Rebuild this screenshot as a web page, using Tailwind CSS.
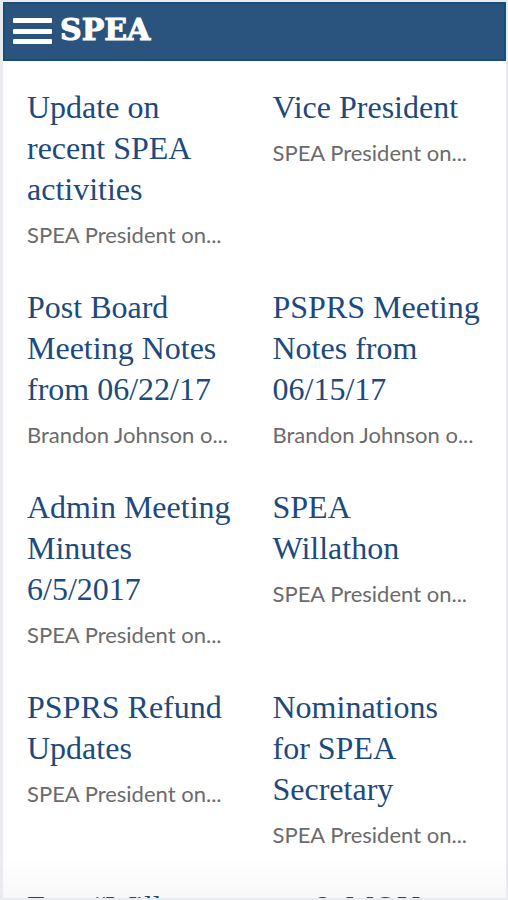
<!DOCTYPE html>
<html lang="en">
  <head>
    <meta charset="UTF-8" />
    <meta name="viewport" content="width=device-width, initial-scale=1.0" />
    <script src="https://cdn.jsdelivr.net/npm/@tailwindcss/browser@4"></script>
    <title>SPEA</title>
  </head>
  <body class="bg-white">
    <div class="relative flex h-screen flex-col overflow-hidden border-2 border-l-3 border-[#e9ebee] bg-white">
      <header class="flex h-[59px] shrink-0 items-center gap-2 border-2 border-[#184f79] bg-[#2a547e] px-2">
        <button type="button" aria-label="Open menu" class="text-white">
          <svg class="h-7 w-[39px]" viewBox="0 0 39 28" fill="currentColor" aria-hidden="true">
            <rect x="0" y="0" width="39" height="5" rx="1" />
            <rect x="0" y="11" width="39" height="5" rx="1" />
            <rect x="0" y="21" width="39" height="5" rx="1" />
          </svg>
        </button>
        <a href="#" class="pb-1 font-['DejaVu_Serif',serif] text-[30px] leading-8 font-bold text-white [-webkit-text-stroke:1px_white]">SPEA</a>
      </header>

      <main class="grid grid-cols-2 gap-x-8 gap-y-[34px] pt-[26px] pr-5 pl-6 font-['Liberation_Serif',serif] text-[32px] leading-[41px] text-[#1d4a7c]">
        <article>
          <h2><a href="#">Update on<br />recent SPEA<br />activities</a></h2>
          <p class="mt-[7px] truncate font-[Lato,sans-serif] text-[22px] leading-9 text-[#6b6b6b]">SPEA President on...</p>
        </article>
        <article>
          <h2><a href="#">Vice President</a></h2>
          <p class="mt-[7px] truncate font-[Lato,sans-serif] text-[22px] leading-9 text-[#6b6b6b]">SPEA President on...</p>
        </article>

        <article>
          <h2><a href="#">Post Board<br />Meeting Notes<br />from 06/22/17</a></h2>
          <p class="mt-[7px] truncate font-[Lato,sans-serif] text-[22px] leading-9 text-[#6b6b6b]">Brandon Johnson o...</p>
        </article>
        <article>
          <h2><a href="#">PSPRS Meeting<br />Notes from<br />06/15/17</a></h2>
          <p class="mt-[7px] truncate font-[Lato,sans-serif] text-[22px] leading-9 text-[#6b6b6b]">Brandon Johnson o...</p>
        </article>

        <article>
          <h2><a href="#">Admin Meeting<br />Minutes<br />6/5/2017</a></h2>
          <p class="mt-[7px] truncate font-[Lato,sans-serif] text-[22px] leading-9 text-[#6b6b6b]">SPEA President on...</p>
        </article>
        <article>
          <h2><a href="#">SPEA<br />Willathon</a></h2>
          <p class="mt-[7px] truncate font-[Lato,sans-serif] text-[22px] leading-9 text-[#6b6b6b]">SPEA President on...</p>
        </article>

        <article>
          <h2><a href="#">PSPRS Refund<br />Updates</a></h2>
          <p class="mt-[7px] truncate font-[Lato,sans-serif] text-[22px] leading-9 text-[#6b6b6b]">SPEA President on...</p>
        </article>
        <article>
          <h2><a href="#">Nominations<br />for SPEA<br />Secretary</a></h2>
          <p class="mt-[7px] truncate font-[Lato,sans-serif] text-[22px] leading-9 text-[#6b6b6b]">SPEA President on...</p>
        </article>

        <article>
          <h2><a href="#">Free “Willat</a></h2>
        </article>
        <article>
          <h2><a href="#">on &amp; MOU</a></h2>
        </article>
      </main>

      <!-- fade at the bottom of the list -->
      <div class="pointer-events-none absolute inset-x-0 bottom-0 h-10 bg-linear-to-b from-black/0 to-black/3"></div>
    </div>
  </body>
</html>
